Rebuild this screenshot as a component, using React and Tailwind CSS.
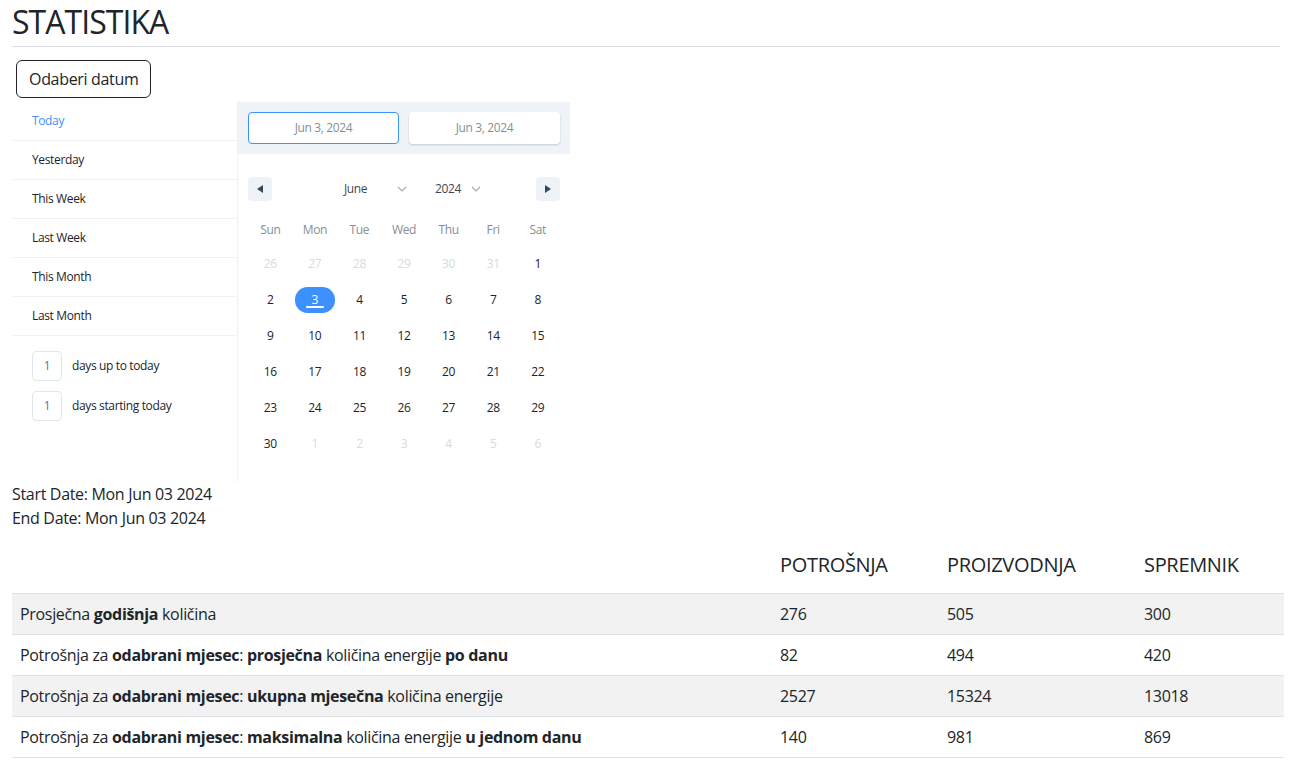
import React from 'react';

const ranges = ['Today', 'Yesterday', 'This Week', 'Last Week', 'This Month', 'Last Month'];
const weekDays = ['Sun', 'Mon', 'Tue', 'Wed', 'Thu', 'Fri', 'Sat'];

// june 2024 grid, passive days flagged
const days = [
    ...[26, 27, 28, 29, 30, 31].map((d) => ({ d, passive: true })),
    ...Array.from({ length: 30 }, (_, i) => ({ d: i + 1, passive: false })),
    ...[1, 2, 3, 4, 5, 6].map((d) => ({ d, passive: true })),
];

const rows = [
    {
        label: (
            <>Prosječna <b>godišnja</b> količina</>
        ),
        values: [276, 505, 300],
    },
    {
        label: (
            <>Potrošnja za <b>odabrani mjesec</b>: <b>prosječna</b> količina energije <b>po danu</b></>
        ),
        values: [82, 494, 420],
    },
    {
        label: (
            <>Potrošnja za <b>odabrani mjesec</b>: <b>ukupna mjesečna</b> količina energije</>
        ),
        values: [2527, 15324, 13018],
    },
    {
        label: (
            <>Potrošnja za <b>odabrani mjesec</b>: <b>maksimalna</b> količina energije <b>u jednom danu</b></>
        ),
        values: [140, 981, 869],
    },
];

const Chevron = () => (
    <svg width="10" height="6" viewBox="0 0 10 6">
        <path d="M1 1l4 4 4-4" fill="none" stroke="#a5adb2" strokeWidth="1.2" />
    </svg>
);

const DateRangePicker = () => (
    <div className="flex text-[12px] text-[#1d2429] tracking-[-0.03em]">
        {/* Defined ranges */}
        <div className="w-[226px] border-r border-[#eff2f7]">
            {ranges.map((r, i) => (
                <div
                    key={r}
                    className={`px-5 py-[10px] leading-[18px] border-b border-[#eff2f7] ${i === 0 ? 'text-[#3d91ff]' : 'text-[#1d2429]'}`}
                >
                    {r}
                </div>
            ))}
            <div className="py-[10px]">
                {['days up to today', 'days starting today'].map((t) => (
                    <div key={t} className="flex items-center px-5 py-[5px]">
                        <div className="w-[30px] h-[30px] mr-[10px] rounded border border-[#dee7eb] flex items-center justify-center text-[#6c767a]">
                            1
                        </div>
                        <span className="text-[#1d2429]">{t}</span>
                    </div>
                ))}
            </div>
        </div>

        {/* Calendar */}
        <div className="w-[332px]">
            <div className="bg-[#eff2f7] p-[10px] flex gap-[10px]">
                <div className="flex-1 h-[32px] bg-white rounded border border-[#3d91ff] flex items-center justify-center text-[#849095]">
                    Jun 3, 2024
                </div>
                <div className="flex-1 h-[32px] bg-white rounded border border-transparent shadow-[0_1px_2px_0_rgba(35,57,66,0.21)] flex items-center justify-center text-[#849095]">
                    Jun 3, 2024
                </div>
            </div>

            <div className="h-[60px] pt-[10px] flex items-center px-[10px]">
                <div className="w-6 h-6 rounded bg-[#eff2f7] flex items-center justify-center">
                    <svg width="6" height="8" viewBox="0 0 6 8"><polygon points="6,0 0,4 6,8" fill="#34495e" /></svg>
                </div>
                <div className="flex items-center text-[#3e484f] font-medium ml-[72px]">
                    <span className="w-[53px]">June</span>
                    <Chevron />
                    <span className="w-[36px] ml-[28px]">2024</span>
                    <Chevron />
                </div>
                <div className="ml-auto w-6 h-6 rounded bg-[#eff2f7] flex items-center justify-center">
                    <svg width="6" height="8" viewBox="0 0 6 8"><polygon points="0,0 6,4 0,8" fill="#34495e" /></svg>
                </div>
            </div>

            <div className="px-[10px] pb-5">
                <div className="grid grid-cols-7">
                    {weekDays.map((w) => (
                        <div key={w} className="h-8 flex items-center justify-center text-[#849095]">
                            {w}
                        </div>
                    ))}
                </div>
                <div className="grid grid-cols-7">
                    {days.map((x, i) => {
                        const selected = !x.passive && x.d === 3;
                        return (
                            <div key={i} className="h-9 relative flex items-center justify-center">
                                {selected && (
                                    <>
                                        <div className="absolute top-[5px] bottom-[5px] left-[2px] right-[2px] rounded-[12.5px] bg-[#3d91ff]" />
                                        <div className="absolute top-[24px] left-1/2 -translate-x-1/2 w-[18px] h-[2px] rounded-sm bg-white" />
                                    </>
                                )}
                                <span
                                    className={`relative ${selected ? 'text-white' : x.passive ? 'text-[#d5dce0]' : 'text-[#1d2429]'}`}
                                >
                                    {x.d}
                                </span>
                            </div>
                        );
                    })}
                </div>
            </div>
        </div>
    </div>
);

export default function App() {
    return (
        <div className="px-3 bg-white text-[#212529] font-['Segoe_UI','Open_Sans',sans-serif] tracking-[-0.02em] min-h-screen">
            <h2 className="text-[32px] leading-[38px] pt-[3px] pb-[5px] border-b border-[#dcdde3] tracking-[-0.03em]">STATISTIKA</h2>

            <button className="mt-[13px] ml-1 px-3 py-[6px] text-base leading-6 border border-[#212529] rounded-md bg-white">
                Odaberi datum
            </button>

            <div className="mt-1">
                <DateRangePicker />
            </div>

            <div className="text-base leading-6">
                <div>Start Date: Mon Jun 03 2024</div>
                <div>End Date: Mon Jun 03 2024</div>
            </div>

            <table className="w-full table-fixed mt-[15px] border-collapse text-base">
                <colgroup>
                    <col className="w-[760px]" />
                    <col className="w-[167px]" />
                    <col className="w-[197px]" />
                    <col className="w-[148px]" />
                </colgroup>
                <thead>
                    <tr className="border-b border-[#dee2e6]">
                        <th />
                        {['POTROŠNJA', 'PROIZVODNJA', 'SPREMNIK'].map((h) => (
                            <th key={h} className="text-left font-normal px-2 pt-2 pb-4 text-[20px] leading-6">
                                {h}
                            </th>
                        ))}
                    </tr>
                </thead>
                <tbody>
                    {rows.map((r, i) => (
                        <tr key={i} className={`border-b border-[#dee2e6] ${i % 2 === 0 ? 'bg-[#f2f2f2]' : 'bg-white'}`}>
                            <td className="p-2 leading-6">{r.label}</td>
                            {r.values.map((v, j) => (
                                <td key={j} className="p-2 leading-6">{v}</td>
                            ))}
                        </tr>
                    ))}
                </tbody>
            </table>
        </div>
    );
}
